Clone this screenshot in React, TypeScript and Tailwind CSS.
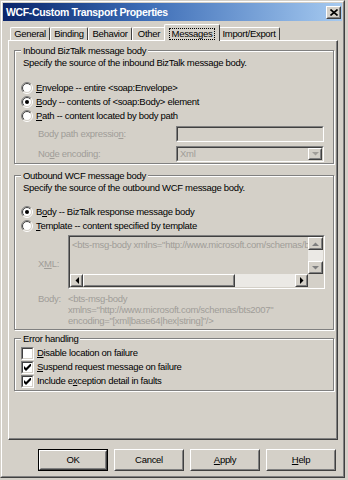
import React, { useId } from "react";

const U = ({ children }: { children: React.ReactNode }) => (
  <span className="underline decoration-1 underline-offset-[1px]">{children}</span>
);

const Radio = ({ checked }: { checked?: boolean }) => {
  const id = useId().replace(/[^a-zA-Z0-9]/g, "");
  return (
    <svg width="12" height="12" viewBox="0 0 12 12" className="shrink-0">
      <defs>
        <linearGradient id={`ro${id}`} x1="0" y1="0" x2="1" y2="1">
          <stop offset="0.5" stopColor="#808080" />
          <stop offset="0.5" stopColor="#ffffff" />
        </linearGradient>
        <linearGradient id={`ri${id}`} x1="0" y1="0" x2="1" y2="1">
          <stop offset="0.5" stopColor="#404040" />
          <stop offset="0.5" stopColor="#d4d0c8" />
        </linearGradient>
      </defs>
      <circle cx="6" cy="6" r="5.5" fill="none" stroke={`url(#ro${id})`} />
      <circle cx="6" cy="6" r="4.5" fill="#fff" stroke={`url(#ri${id})`} />
      {checked && <circle cx="6" cy="6" r="2" fill="#000" />}
    </svg>
  );
};

const Check = ({ checked }: { checked?: boolean }) => (
  <div className="w-[13px] h-[13px] shrink-0 border border-t-[#808080] border-l-[#808080] border-r-white border-b-white">
    <div className="w-full h-full bg-white border border-t-[#404040] border-l-[#404040] border-r-[#d4d0c8] border-b-[#d4d0c8] flex items-center justify-center">
      {checked && (
        <svg width="7" height="7" viewBox="0 0 7 7">
          <path d="M0 2 L2 4 L7 -1 L7 2 L2 7 L0 5 Z" fill="#000" />
        </svg>
      )}
    </div>
  </div>
);

// raised 3d box used for buttons and scroll arrows
const Raised = ({ className, children }: { className?: string; children?: React.ReactNode }) => (
  <div className={`border border-t-white border-l-white border-r-[#404040] border-b-[#404040] bg-[#d4d0c8] ${className ?? ""}`}>
    <div className="w-full h-full border border-t-[#d4d0c8] border-l-[#d4d0c8] border-r-[#808080] border-b-[#808080] flex items-center justify-center">
      {children}
    </div>
  </div>
);

const Sunken = ({ className, children }: { className?: string; children?: React.ReactNode }) => (
  <div className={`border border-t-[#808080] border-l-[#808080] border-r-white border-b-white ${className ?? ""}`}>
    <div className="w-full h-full border border-t-[#404040] border-l-[#404040] border-r-[#d4d0c8] border-b-[#d4d0c8] bg-[#d4d0c8] flex">
      {children}
    </div>
  </div>
);

const Arrow = ({ dir, color = "#000" }: { dir: "up" | "down" | "left" | "right"; color?: string }) => {
  const pts = {
    up: "0,4 7,4 3.5,0.5",
    down: "0,0 7,0 3.5,3.5",
    left: "4,0 4,7 0.5,3.5",
    right: "0,0 0,7 3.5,3.5",
  }[dir];
  const vertical = dir === "up" || dir === "down";
  return (
    <svg width={vertical ? 7 : 4} height={vertical ? 4 : 7} viewBox={vertical ? "0 0 7 4" : "0 0 4 7"}>
      <polygon points={pts} fill={color} />
    </svg>
  );
};

const Group = ({ title, h, children }: { title: string; h: string; children: React.ReactNode }) => (
  <div className={`relative w-[320px] ${h} border border-[#808080] shadow-[inset_1px_1px_0_#fff,1px_1px_0_#fff]`}>
    <span className="absolute left-[6px] -top-[6px] px-[2px] bg-[#d4d0c8] leading-[11px]">{title}</span>
    {children}
  </div>
);

const Tab = ({ label, w, selected }: { label: string; w: string; selected?: boolean }) =>
  selected ? (
    <div className={`relative z-10 ${w} -mx-[2px] h-[17px] -mb-px bg-[#d4d0c8] border-l border-t border-r border-l-white border-t-white border-r-[#404040] rounded-t-[2px] flex items-start justify-center pt-[3px]`}>
      <span className="border border-dotted border-black px-[2px] leading-[10px]">{label}</span>
    </div>
  ) : (
    <div className={`${w} h-[13px] border-l border-t border-r border-l-white border-t-white border-r-[#404040] rounded-t-[2px] flex items-center justify-center`}>
      {label}
    </div>
  );

export default function App() {
  return (
    <div className="w-[348px] h-[480px] bg-[#d4d0c8] overflow-hidden text-black font-['Liberation_Sans',Arial,sans-serif] text-[9.5px] tracking-[-0.3px] leading-none">
      <div className="w-[345px] h-[478px] border border-t-[#d4d0c8] border-l-[#d4d0c8] border-r-[#404040] border-b-[#404040]">
        <div className="h-full border border-t-white border-l-white border-r-[#808080] border-b-[#808080] p-px flex flex-col">
          {/* title bar */}
          <div className="h-[18px] shrink-0 flex items-center justify-between pl-[3px] pr-px bg-linear-to-r from-[#0a246a] via-[#3a6ab4] via-40% to-[#a6caf0]">
            <span className="text-white font-bold text-[10.5px] tracking-[-0.35px]">WCF-Custom Transport Properties</span>
            <Raised className="w-[15px] h-[13px]">
              <svg width="8" height="7" viewBox="0 0 8 7">
                <path d="M0.5 0.5 L7.5 6.5 M7.5 0.5 L0.5 6.5" stroke="#000" strokeWidth="1.6" />
              </svg>
            </Raised>
          </div>

          {/* tabs */}
          <div className="h-[19px] shrink-0 flex items-end pl-[7px]">
            <Tab label="General" w="w-[40px]" />
            <Tab label="Binding" w="w-[38px]" />
            <Tab label="Behavior" w="w-[44px]" />
            <Tab label="Other" w="w-[34px]" />
            <Tab label="Messages" w="w-[56px]" selected />
            <Tab label="Import/Export" w="w-[62px]" />
          </div>

          {/* tab page */}
          <div className="ml-[5px] w-[330px] h-[400px] shrink-0 border border-t-white border-l-white border-r-[#404040] border-b-[#404040]">
            <div className="h-full border-r border-b border-r-[#808080] border-b-[#808080] pt-[9px] pl-[5px] flex flex-col">
              <Group title="Inbound BizTalk message body" h="h-[114px]">
                <div className="pt-[6px] pl-[8px] h-[18px] flex items-center">Specify the source of the inbound BizTalk message body.</div>
                <div className="mt-[12px] pl-[6px] flex flex-col">
                  <div className="h-[14px] flex items-center gap-[3px]">
                    <Radio />
                    <span><U>E</U>nvelope -- entire &lt;soap:Envelope&gt;</span>
                  </div>
                  <div className="h-[14px] flex items-center gap-[3px]">
                    <Radio checked />
                    <span><U>B</U>ody -- contents of &lt;soap:Body&gt; element</span>
                  </div>
                  <div className="h-[14px] flex items-center gap-[3px]">
                    <Radio />
                    <span><U>P</U>ath -- content located by body path</span>
                  </div>
                </div>
                <div className="mt-[3px] pl-[23px] h-[16px] flex items-center text-[#a09d98]">
                  <span className="w-[138px]">Body path expressio<U>n</U>:</span>
                  <Sunken className="w-[148px] h-[16px]" />
                </div>
                <div className="mt-[4px] pl-[23px] h-[16px] flex items-center text-[#a09d98]">
                  <span className="w-[138px]">No<U>d</U>e encoding:</span>
                  <Sunken className="w-[148px] h-[16px]">
                    <span className="flex-1 pl-[2px] self-center">Xml</span>
                    <Raised className="w-[14px] h-full">
                      <Arrow dir="down" color="#a09d98" />
                    </Raised>
                  </Sunken>
                </div>
              </Group>

              <div className="mt-[11px]">
                <Group title="Outbound WCF message body" h="h-[155px]">
                  <div className="pt-[6px] pl-[8px] h-[18px] flex items-center">Specify the source of the outbound WCF message body.</div>
                  <div className="mt-[11px] pl-[6px] flex flex-col">
                    <div className="h-[14px] flex items-center gap-[3px]">
                      <Radio checked />
                      <span>B<U>o</U>dy -- BizTalk response message body</span>
                    </div>
                    <div className="h-[14px] flex items-center gap-[3px]">
                      <Radio />
                      <span><U>T</U>emplate -- content specified by template</span>
                    </div>
                  </div>
                  <div className="mt-[2px] pl-[23px] flex items-center text-[#a09d98]">
                    <span className="w-[30px] pt-[4px]">X<U>M</U>L:</span>
                    <Sunken className="w-[257px] h-[54px]">
                      <div className="flex flex-col w-full">
                        <div className="flex h-[37px]">
                          <div className="flex-1 overflow-hidden whitespace-nowrap pl-[2px] pt-[3px]">
                            &lt;bts-msg-body xmlns="http://www.microsoft.com/schemas/bts2007" encoding="[xml|base64|hex|string]"/&gt;
                          </div>
                          <div className="w-[15px] flex flex-col">
                            <Raised className="h-[13px]"><Arrow dir="up" color="#808080" /></Raised>
                            <div className="flex-1 bg-[#ebe9e5]" />
                            <Raised className="h-[13px]"><Arrow dir="down" color="#808080" /></Raised>
                          </div>
                        </div>
                        <div className="flex h-[13px]">
                          <Raised className="w-[13px]"><Arrow dir="left" /></Raised>
                          <Raised className="w-[152px]" />
                          <div className="flex-1 bg-[#ebe9e5]" />
                          <Raised className="w-[13px]"><Arrow dir="right" /></Raised>
                          <div className="w-[15px] bg-[#d4d0c8]" />
                        </div>
                      </div>
                    </Sunken>
                  </div>
                  <div className="mt-[4px] pl-[23px] flex text-[#a09d98] leading-[11px]">
                    <span className="w-[30px]">Body:</span>
                    <div className="flex flex-col">
                      <span>&lt;bts-msg-body</span>
                      <span>xmlns="http://www.microsoft.com/schemas/bts2007"</span>
                      <span>encoding="[xml|base64|hex|string]"/&gt;</span>
                    </div>
                  </div>
                </Group>
              </div>

              <div className="mt-[8px]">
                <Group title="Error handling" h="h-[53px]">
                  <div className="pt-[7px] pl-[6px] flex flex-col">
                    <div className="h-[14px] flex items-center gap-[3px]">
                      <Check />
                      <span><U>D</U>isable location on failure</span>
                    </div>
                    <div className="h-[14px] flex items-center gap-[3px]">
                      <Check checked />
                      <span><U>S</U>uspend request message on failure</span>
                    </div>
                    <div className="h-[14px] flex items-center gap-[3px]">
                      <Check checked />
                      <span>Include e<U>x</U>ception detail in faults</span>
                    </div>
                  </div>
                </Group>
              </div>
            </div>
          </div>

          {/* dialog buttons */}
          <div className="mt-[9px] h-[22px] shrink-0 flex justify-end gap-[6px] pr-[6px]">
            <div className="w-[70px] h-[22px] border border-black">
              <Raised className="w-full h-full">OK</Raised>
            </div>
            <Raised className="w-[70px] h-[22px]">Cancel</Raised>
            <Raised className="w-[70px] h-[22px]"><span><U>A</U>pply</span></Raised>
            <Raised className="w-[70px] h-[22px]"><span><U>H</U>elp</span></Raised>
          </div>
        </div>
      </div>
    </div>
  );
}
